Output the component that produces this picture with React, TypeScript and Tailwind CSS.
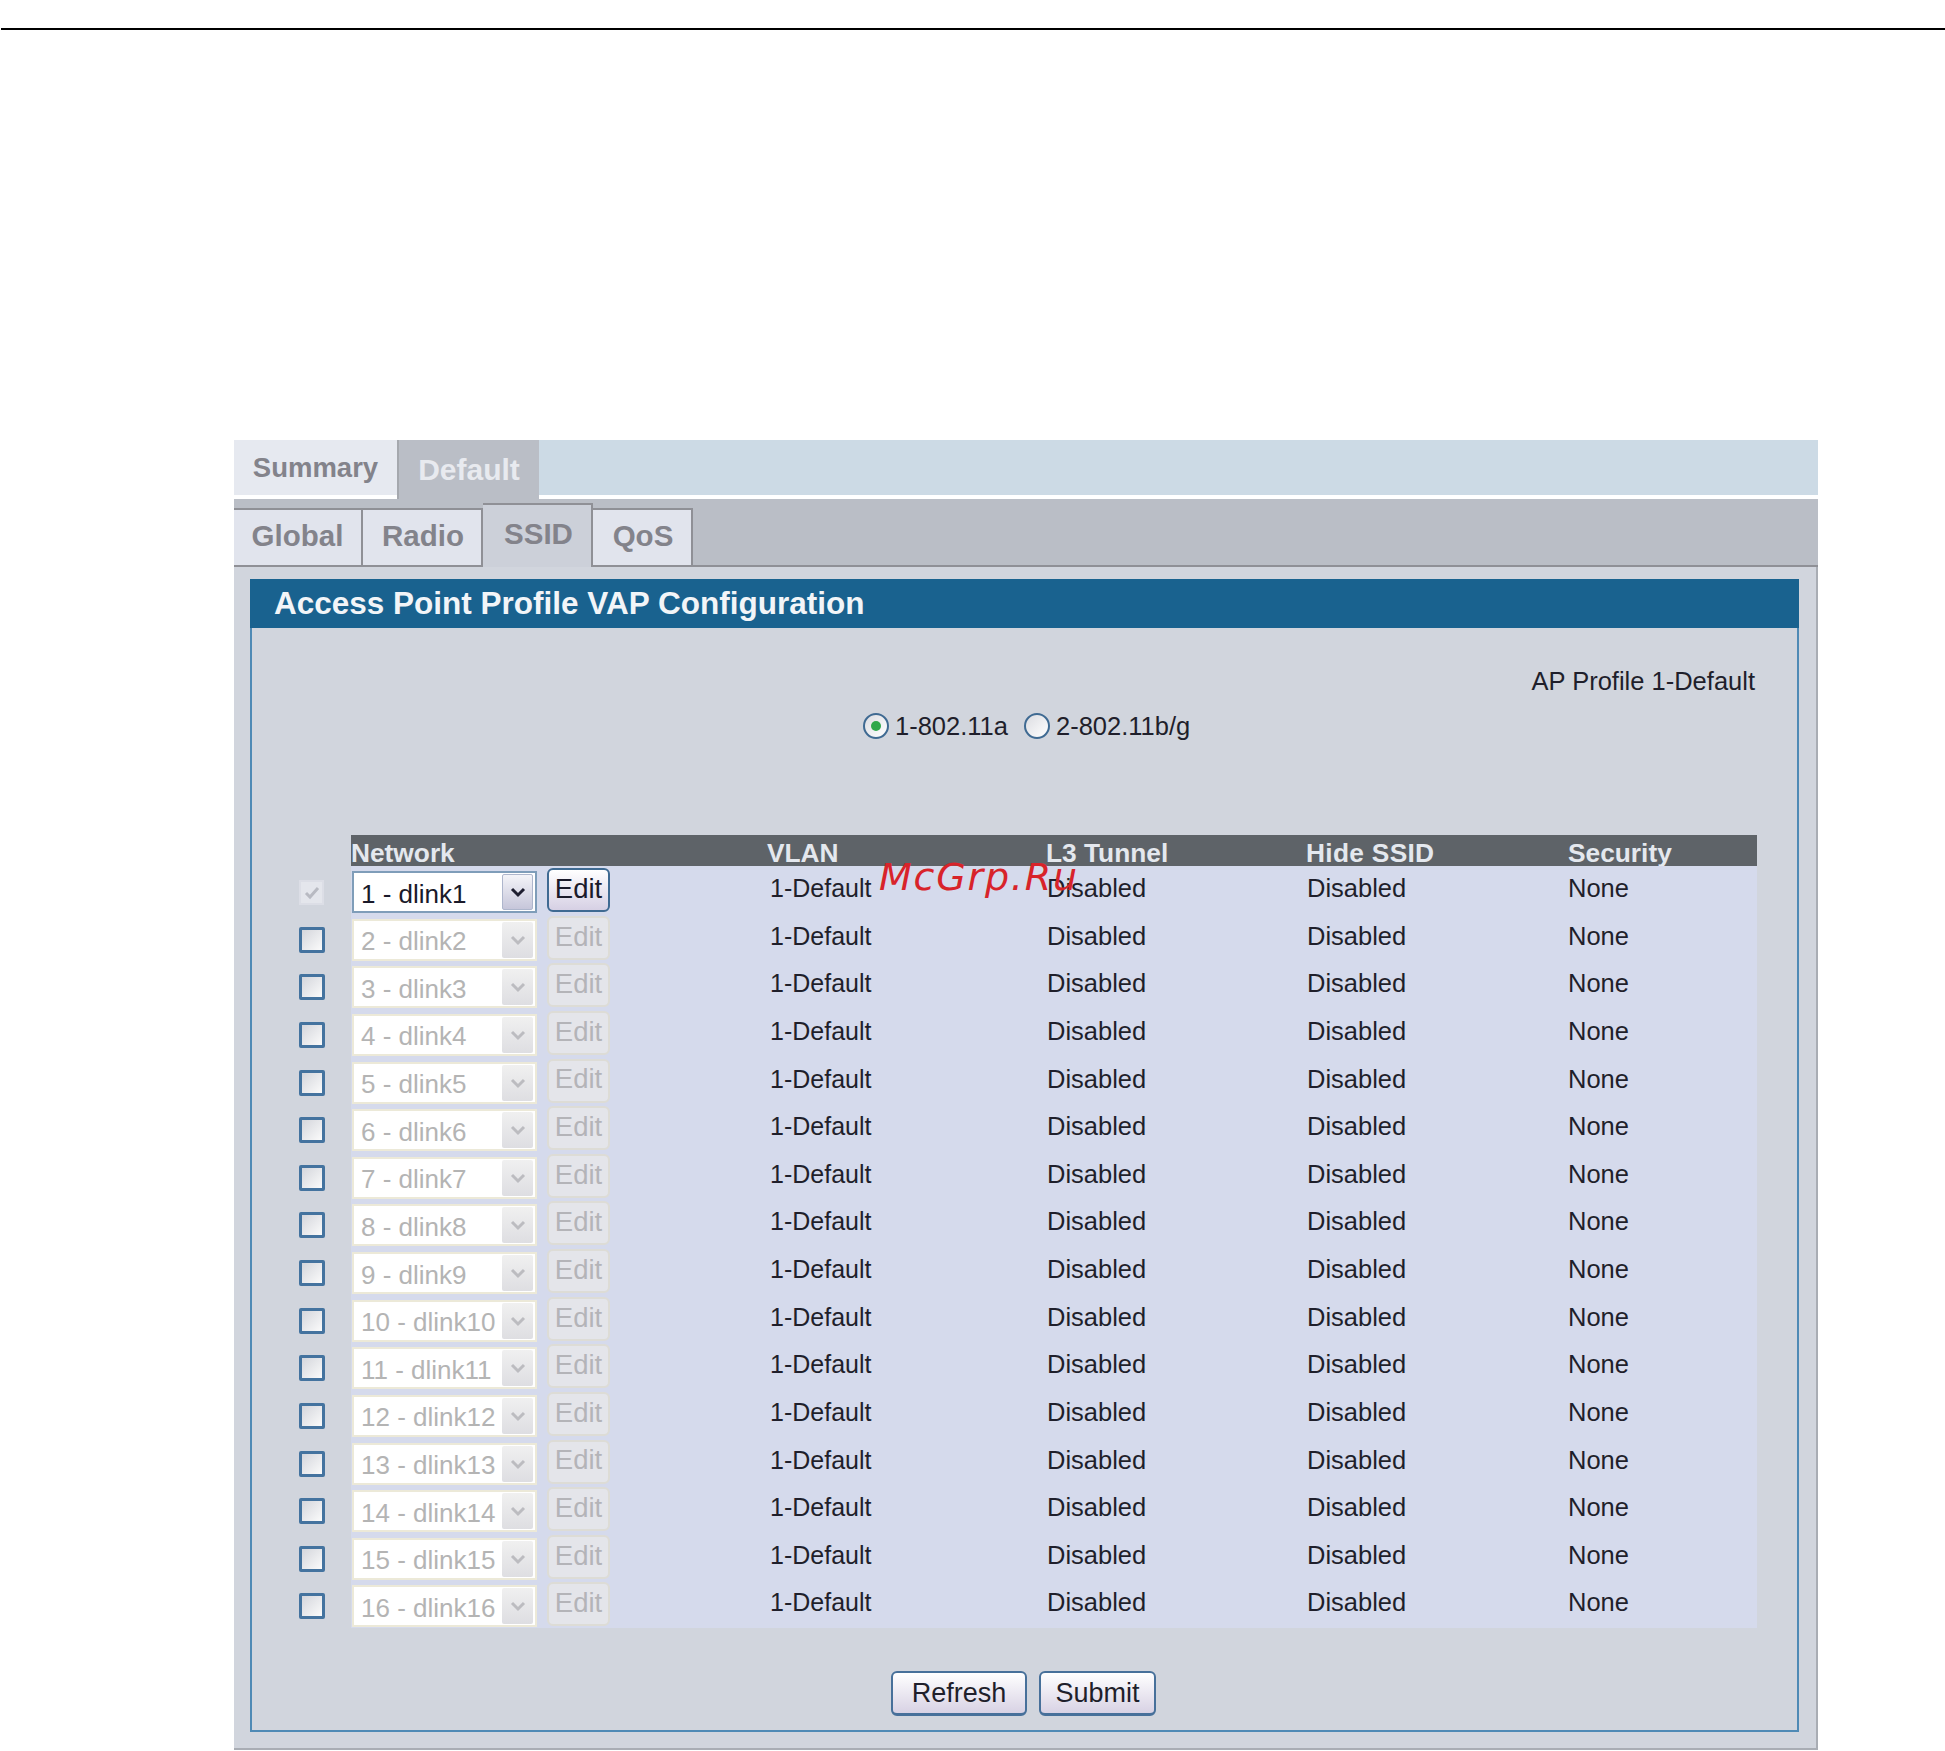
import React, { FC } from 'react';

const font = "font-['Liberation_Sans',Arial,sans-serif]";

const rows = Array.from({ length: 16 }, (_, i) => i + 1);

const Chevron: FC<{ color: string }> = ({ color }) => (
  <svg width="16" height="12" viewBox="0 0 16 12" fill="none">
    <path d="M2 3 L8 9 L14 3" stroke={color} strokeWidth="3" />
  </svg>
);

const Tab: FC<{ label: string; className: string; textClass?: string }> = ({ label, className, textClass }) => (
  <div className={`flex items-center justify-center font-bold ${textClass || 'text-[29.5px] text-[#83838b]'} ${className}`}>
    {label}
  </div>
);

const Cell: FC<{ className: string; text: string }> = ({ className, text }) => (
  <div className={`${className} leading-[44px] text-[#1f1f2b]`}>{text}</div>
);

const Row: FC<{ n: number }> = ({ n }) => {
  const active = n === 1;
  return (
    <div className="flex h-[47.64px]">
      <div className="w-[95px] flex items-start pt-[13px] pl-[43px]">
        {active ? (
          <div className="w-[25px] h-[25px] mt-[1px] bg-[#e4e6ec] border-2 border-[#dcdee6] flex items-center justify-center">
            <svg width="16" height="14" viewBox="0 0 16 14" fill="none">
              <path d="M2 7 L6 11 L14 2" stroke="#b8bac2" strokeWidth="3" />
            </svg>
          </div>
        ) : (
          <div className="w-[26px] h-[26px] border-[3px] border-[#44739f] rounded-[2px] bg-gradient-to-br from-[#d4d6dc] to-[#fbfbfb]" />
        )}
      </div>
      <div className="flex-1 flex bg-[#d5daec]">
        <div className="w-[417px] flex items-start">
          <div
            className={`mt-[5px] ml-[1px] w-[185px] h-[42px] flex items-center justify-between pl-[7px] pr-[2px] border-2 bg-white text-[26px] ${
              active ? 'border-[#7f9db9] text-[#1a1a2a]' : 'border-[#ece9d8] text-[#b4b4b4]'
            }`}
          >
            <span className="pt-[4px]">{n} - dlink{n}</span>
            <div
              className={`w-[31px] h-[36px] flex items-center justify-center rounded-[2px] bg-gradient-to-b ${
                active ? 'from-[#f4f4f8] to-[#c6c6da] border border-[#aeb6cc]' : 'from-[#f0f0f0] to-[#dedee2]'
              }`}
            >
              <Chevron color={active ? '#1e1e30' : '#bcbcc0'} />
            </div>
          </div>
          <div
            className={`mt-[2px] ml-[10px] w-[63px] h-[44px] flex items-center justify-center text-[27.5px] rounded-[6px] border-2 pb-[3px] ${
              active
                ? 'border-[#3f6a92] bg-gradient-to-b from-white to-[#d6d0e4] text-[#1a1a2a]'
                : 'border-[#dddcd6] bg-[#e4e5ea] text-[#b4b4b8]'
            }`}
          >
            Edit
          </div>
        </div>
        <Cell className="w-[279px] pl-[2px] text-[25px]" text="1-Default" />
        <Cell className="w-[260px] text-[25.5px]" text="Disabled" />
        <Cell className="w-[261px] text-[25.5px]" text="Disabled" />
        <Cell className="flex-1 text-[25.5px]" text="None" />
      </div>
    </div>
  );
};

const Radio: FC<{ checked?: boolean }> = ({ checked }) => (
  <div className="w-[26px] h-[26px] rounded-full border-2 border-[#3f6a92] bg-gradient-to-br from-[#dcdde2] to-white flex items-center justify-center">
    {checked && <div className="w-[10px] h-[10px] rounded-full bg-[#2fa84a]" />}
  </div>
);

const PushButton: FC<{ label: string; className: string }> = ({ label, className }) => (
  <div
    className={`h-[45px] flex items-center justify-center text-[27px] text-[#1f1f2b] rounded-[6px] border-2 border-[#47709a] border-b-[3px] bg-gradient-to-b from-white to-[#d8d2e4] ${className}`}
  >
    {label}
  </div>
);

const App: FC = () => {
  return (
    <div className={`${font} w-[1945px] h-[1751px] bg-white overflow-hidden relative`}>
      <div className="pt-[28px] pl-[1px]">
        <div className="h-[2px] bg-black" />
      </div>

      <div className="mt-[410px] ml-[234px] w-[1584px] h-[1310px] flex flex-col">
        {/* top tabs */}
        <div className="h-[59px] flex bg-[#ccdae5] shrink-0">
          <div className="w-[163px] flex flex-col">
            <Tab label="Summary" className="flex-1 bg-[#e6e9f0]" textClass="text-[27.5px] text-[#83838b]" />
            <div className="h-[4px] bg-white" />
          </div>
          <Tab
            label="Default"
            className="w-[142px] bg-[#babec6] border-l-2 border-[#a5a8ae]"
            textClass="text-[30px] text-[#e8eaef]"
          />
          <div className="flex-1 flex flex-col justify-end">
            <div className="h-[4px] bg-white" />
          </div>
        </div>

        {/* sub tabs */}
        <div className="h-[68px] flex items-end bg-[#babec6] border-b-2 border-[#8f9096] shrink-0">
          <Tab label="Global" className="w-[129px] h-[57px] pb-[3px] bg-[#e1e4ed] border-t-2 border-r-2 border-[#8f9096]" />
          <Tab label="Radio" className="w-[120px] h-[57px] pb-[3px] pl-[2px] bg-[#e1e4ed] border-t-2 border-r-2 border-[#8f9096]" />
          <Tab
            label="SSID"
            className="w-[110px] h-[64px] -mb-[2px] pb-[3px] pl-[3px] bg-[#ccd0d9] border-t-2 border-r-2 border-[#8f9096]"
          />
          <Tab label="QoS" className="w-[100px] h-[57px] pb-[3px] pl-[2px] bg-[#e1e4ed] border-t-2 border-r-2 border-[#8f9096]" />
        </div>

        {/* content */}
        <div className="flex-1 bg-[#d1d5dd] border-r-2 border-b-2 border-[#a9adb4] pt-[12px] pl-[16px] pr-[17px] pb-[16px]">
          <div className="h-full flex flex-col border-2 border-t-0 border-[#4f8ab5]">
            <div className="h-[49px] bg-[#19628f] flex items-center pl-[24px] -mx-[2px] text-[31.5px] font-bold text-[#f2f5f8] shrink-0">
              Access Point Profile VAP Configuration
            </div>

            <div className="flex-1 flex flex-col pr-[40px]">
              <div className="mt-[35px] pr-[2px] text-right text-[25.5px] leading-[36px] text-[#1f1f2b]">
                AP Profile 1-Default
              </div>

              <div className="mt-[9px] flex items-center text-[25.5px] leading-[36px] text-[#1f1f2b] pl-[611px]">
                <Radio checked />
                <span className="ml-[6px]">1-802.11a</span>
                <span className="ml-[16px]">
                  <Radio />
                </span>
                <span className="ml-[6px]">2-802.11b/g</span>
              </div>

              <div className="mt-[91px] flex h-[31px] pl-[99px]">
                <div className="flex-1 flex bg-[#5e6368] text-[#e4e8ee] font-bold text-[26.3px] leading-[36px]">
                  <div className="w-[416px]">Network</div>
                  <div className="w-[279px]">VLAN</div>
                  <div className="w-[260px]">L3 Tunnel</div>
                  <div className="w-[262px] tracking-[0.3px]">Hide SSID</div>
                  <div className="flex-1">Security</div>
                </div>
              </div>

              <div className="flex flex-col pl-[4px]">
                {rows.map((n) => (
                  <Row key={n} n={n} />
                ))}
              </div>

              <div className="mt-[43px] flex pl-[639px]">
                <PushButton label="Refresh" className="w-[136px]" />
                <PushButton label="Submit" className="w-[117px] ml-[12px]" />
              </div>
            </div>
          </div>
        </div>
      </div>

      <div className="absolute left-[879px] top-[855px] text-[38px] leading-[44px] tracking-[1.8px] italic text-[#d8232a] font-['DejaVu_Sans',sans-serif]">
        McGrp.Ru
      </div>
    </div>
  );
};

export default App;
